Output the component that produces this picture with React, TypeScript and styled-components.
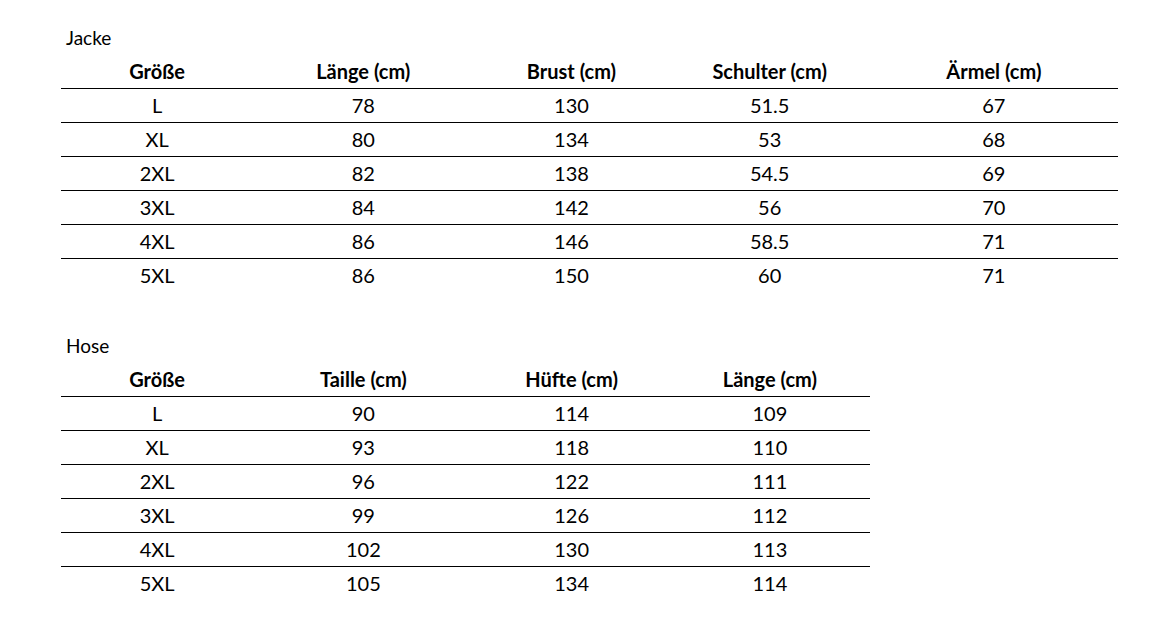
import styled, { createGlobalStyle } from "styled-components";

interface SizeTable {
  title: string;
  headers: string[];
  rows: string[][];
}

const COLUMN_WIDTHS = [192, 220, 196, 200, 248];

const tables: SizeTable[] = [
  {
    title: "Jacke",
    headers: ["Größe", "Länge (cm)", "Brust (cm)", "Schulter (cm)", "Ärmel (cm)"],
    rows: [
      ["L", "78", "130", "51.5", "67"],
      ["XL", "80", "134", "53", "68"],
      ["2XL", "82", "138", "54.5", "69"],
      ["3XL", "84", "142", "56", "70"],
      ["4XL", "86", "146", "58.5", "71"],
      ["5XL", "86", "150", "60", "71"],
    ],
  },
  {
    title: "Hose",
    headers: ["Größe", "Taille (cm)", "Hüfte (cm)", "Länge (cm)"],
    rows: [
      ["L", "90", "114", "109"],
      ["XL", "93", "118", "110"],
      ["2XL", "96", "122", "111"],
      ["3XL", "99", "126", "112"],
      ["4XL", "102", "130", "113"],
      ["5XL", "105", "134", "114"],
    ],
  },
];

export default function App(): JSX.Element {
  return (
    <>
      <GlobalStyle />
      <Page>
        {tables.map((table) => {
          const widths = COLUMN_WIDTHS.slice(0, table.headers.length);
          const total = widths.reduce((a, b) => a + b, 0) + 1;
          return (
            <Section key={table.title}>
              <Title>{table.title}</Title>
              <Table style={{ width: total }}>
                <colgroup>
                  {widths.map((w, i) => (
                    <col key={i} style={{ width: w }} />
                  ))}
                </colgroup>
                <thead>
                  <Row>
                    {table.headers.map((h) => (
                      <HeadCell key={h}>{h}</HeadCell>
                    ))}
                  </Row>
                </thead>
                <tbody>
                  {table.rows.map((row) => (
                    <Row key={row[0]}>
                      {row.map((value, i) => (
                        <Cell key={i}>{value}</Cell>
                      ))}
                    </Row>
                  ))}
                </tbody>
              </Table>
            </Section>
          );
        })}
      </Page>
    </>
  );
}

const GlobalStyle = createGlobalStyle`
  body {
    margin: 0;
    background: #ffffff;
    font-family: Lato, "Open Sans", sans-serif;
    color: #000000;
  }
`;

const Page = styled.div`
  display: flex;
  flex-direction: column;
  align-items: flex-start;
  gap: 42px;
  padding: 26px 0 0 61px;
`;

const Section = styled.section`
  display: flex;
  flex-direction: column;
  align-items: flex-start;
  gap: 4px;
`;

const Title = styled.div`
  height: 24px;
  line-height: 24px;
  font-size: 19px;
  padding-left: 5px;
`;

const Table = styled.table`
  border-collapse: collapse;
  table-layout: fixed;
  font-size: 20px;
`;

const Row = styled.tr`
  height: 34px;
  border-bottom: 1px solid #000;
  &:last-child {
    border-bottom: none;
  }
  thead &:last-child {
    border-bottom: 1px solid #000;
  }
`;

const HeadCell = styled.th`
  padding: 0;
  height: 33px;
  font-weight: 700;
  text-align: center;
  vertical-align: middle;
`;

const Cell = styled.td`
  padding: 0;
  height: 33px;
  text-align: center;
  vertical-align: middle;
`;
